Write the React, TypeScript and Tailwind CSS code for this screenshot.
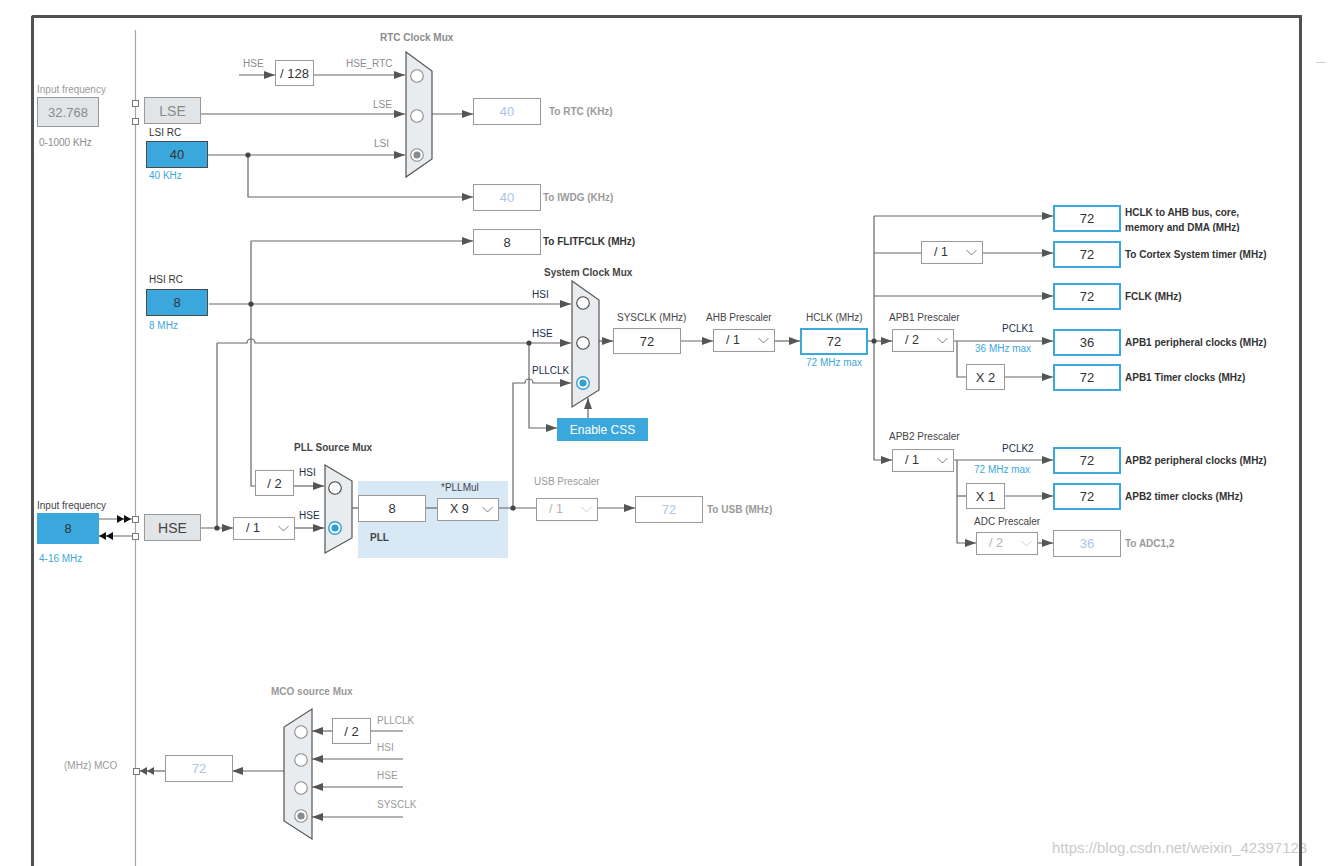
import React from 'react';

type Tone = 'plain' | 'gray' | 'blue' | 'fill' | 'out' | 'dim';

const tones: Record<Tone, string> = {
  plain: 'bg-white border border-[#9a9a9a] text-[#333]',
  gray: 'bg-[#e2e5e8] border border-[#9a9a9a] text-[#8a8a8a]',
  blue: 'bg-[#3aa8dc] border border-[#4a4a4a] text-[#333]',
  fill: 'bg-[#3aa8dc] text-[#333]',
  out: 'bg-white border-2 border-[#3aa8dc] text-[#333]',
  dim: 'bg-white border border-[#9a9a9a] text-[#a9c6e6]',
};

function Box({ className = '', tone = 'plain', children }: { className?: string; tone?: Tone; children?: React.ReactNode }) {
  return (
    <div className={`flex shrink-0 items-center justify-center text-[13px] leading-none ${tones[tone]} ${className}`}>
      {children}
    </div>
  );
}

function Select({ className = '', value, dim = false }: { className?: string; value: string; dim?: boolean }) {
  return (
    <div
      className={`flex shrink-0 items-center justify-between w-[62px] h-[23px] pl-[12px] pr-[5px] bg-white border border-[#9a9a9a] text-[12.5px] leading-none ${
        dim ? 'text-[#b4b4b4]' : 'text-[#333]'
      } ${className}`}
    >
      <span>{value}</span>
      <svg width="11" height="7" viewBox="0 0 11 7">
        <path d="M0.5 1 L5.5 6 L10.5 1" fill="none" stroke={dim ? '#cfcfcf' : '#808080'} strokeWidth="1" />
      </svg>
    </div>
  );
}

function Label({ className = '', children }: { className?: string; children: React.ReactNode }) {
  return <div className={`whitespace-nowrap leading-none text-[10px] ${className}`}>{children}</div>;
}

// a label pinned to a wire or mux, centred on its y
function Tag({ className = '', children }: { className?: string; children: React.ReactNode }) {
  return <Label className={`absolute -translate-y-1/2 ${className}`}>{children}</Label>;
}

// output box with its caption at the right
function Output({ className = '', value, caption, dim = false, gap = 'gap-[4px]' }: { className?: string; value: string; caption: string; dim?: boolean; gap?: string }) {
  return (
    <div className={`absolute flex items-center ${gap} ${className}`}>
      <Box tone={dim ? 'dim' : 'out'} className="w-[68px] h-[27px]">
        {value}
      </Box>
      <Label className={`font-bold ${dim ? 'text-[#9a9a9a]' : 'text-[#333]'}`}>{caption}</Label>
    </div>
  );
}

// wires that end in an arrow head
const arrowed = [
  'M239 75H275',
  'M313 75H405',
  'M200 114H405',
  'M207 155H405',
  'M432 114H473',
  'M248 155V197H473',
  'M251 241H473',
  'M209 304H571',
  'M217 343H247a4 4 0 0 1 8 0H571',
  'M200 528H233',
  'M294 528H324',
  'M293 486H324',
  'M513 508V383H525a4 4 0 0 1 8 0H571',
  'M529 343V428H557',
  'M588 418V398',
  'M597 508H635',
  'M599 341H613',
  'M680 341H713',
  'M774 341H800',
  'M867 341H892',
  'M874 216H1053',
  'M982 253H1053',
  'M874 296H1053',
  'M874 341V460H892',
  'M953 341H1053',
  'M1004 377H1053',
  'M953 460H1053',
  'M957 460V543H976',
  'M1004 496H1053',
  'M1037 543H1053',
  'M332 731H312',
  'M403 759H312',
  'M403 787H312',
  'M403 817H312',
  'M284 771H232',
];

const plain = [
  'M251 241V486H255',
  'M217 343V528',
  'M351 508H358',
  'M425 508H437',
  'M498 508H536',
  'M874 216V341',
  'M874 253H921',
  'M957 341V377H966',
  'M957 496H966',
  'M403 731H370',
  'M165 771H139',
  'M98 519H132',
  'M98 536H132',
];

const dots: [number, number][] = [
  [248, 155],
  [251, 304],
  [217, 528],
  [529, 343],
  [513, 508],
  [874, 341],
];

type Radio = { x: number; y: number; on?: 'gray' | 'blue'; light?: boolean };

const radios: Radio[] = [
  { x: 417, y: 76, light: true },
  { x: 417, y: 116, light: true },
  { x: 417, y: 155, on: 'gray' },
  { x: 583, y: 303 },
  { x: 583, y: 343 },
  { x: 583, y: 383, on: 'blue' },
  { x: 335, y: 488 },
  { x: 335, y: 528, on: 'blue' },
  { x: 301, y: 732, light: true },
  { x: 301, y: 760, light: true },
  { x: 301, y: 788, light: true },
  { x: 301, y: 816, on: 'gray' },
];

const muxes = [
  '406,52 432,71 432,159 406,177',
  '572,281 599,300 599,390 572,407',
  '325,465 352,481 352,538 325,553',
  '312,709 312,839 284,821 284,727',
];

const ports: [number, number][] = [
  [132, 100],
  [132, 118],
  [132, 516],
  [132, 533],
  [133, 768],
];

function Wires() {
  return (
    <svg className="absolute inset-0" width="1332" height="866">
      <defs>
        <marker id="ar" viewBox="0 0 11 8" refX="11" refY="4" markerWidth="11" markerHeight="8" markerUnits="userSpaceOnUse" orient="auto">
          <path d="M0 0 L11 4 L0 8 z" fill="#555" />
        </marker>
      </defs>
      <line x1="135.5" y1="30" x2="135.5" y2="866" stroke="#a6a6a6" strokeWidth="1.2" />
      <line x1="1316" y1="62.5" x2="1326" y2="62.5" stroke="#d0d0d0" strokeWidth="1" />
      {plain.map((d) => (
        <path key={d} d={d} fill="none" stroke="#666" strokeWidth="1.2" />
      ))}
      {arrowed.map((d) => (
        <path key={d} d={d} fill="none" stroke="#666" strokeWidth="1.2" markerEnd="url(#ar)" />
      ))}
      {dots.map(([x, y]) => (
        <circle key={`${x}-${y}`} cx={x} cy={y} r="2.6" fill="#444" />
      ))}
      {muxes.map((p) => (
        <polygon key={p} points={p} fill="#e9ecef" stroke="#555" strokeWidth="1.2" />
      ))}
      {radios.map((r) => (
        <g key={`${r.x}-${r.y}`}>
          <circle
            cx={r.x}
            cy={r.y}
            r="6.3"
            fill="#fff"
            stroke={r.on === 'blue' ? '#2f9fd8' : r.on === 'gray' || r.light ? '#8c8c8c' : '#444'}
            strokeWidth={r.on === 'blue' ? 1.4 : 1.1}
          />
          {r.on && <circle cx={r.x} cy={r.y} r="3.6" fill={r.on === 'blue' ? '#2f9fd8' : '#8a8a8a'} />}
        </g>
      ))}
      {/* HSE pad arrows */}
      <polygon points="117,515 124,519 117,523" fill="#111" />
      <polygon points="124,515 131,519 124,523" fill="#111" />
      <polygon points="113,532 106,536 113,540" fill="#111" />
      <polygon points="106,532 99,536 106,540" fill="#111" />
      {/* MCO pad arrows */}
      <polygon points="147,767 140,771 147,775" fill="#555" />
      <polygon points="154,767 147,771 154,775" fill="#555" />
      {ports.map(([x, y]) => (
        <rect key={`${x}-${y}`} x={x + 0.5} y={y + 0.5} width="6" height="6" fill="#fff" stroke="#777" strokeWidth="1" />
      ))}
    </svg>
  );
}

export default function App() {
  return (
    <div className="relative w-[1332px] h-[866px] overflow-hidden bg-white font-['Liberation_Sans',Arial,sans-serif]">
      <div className="absolute inset-0">
        <div className="absolute left-[1052px] top-[838px] whitespace-nowrap text-[15px] leading-[20px] text-[#cacaca]">
          https://blog.csdn.net/weixin_42397123
        </div>

        {/* PLL area background */}
        <div className="absolute left-[358px] top-[481px] w-[150px] h-[77px] bg-[#d9e8f5]" />

        <Wires />

        {/* RTC / LSE / LSI */}
        <Tag className="left-[380px] top-[38px] font-bold text-[#8c8c8c]">RTC Clock Mux</Tag>
        <Tag className="left-[243px] top-[64px] text-[#8c8c8c]">HSE</Tag>
        <Tag className="left-[346px] top-[64px] text-[#8c8c8c]">HSE_RTC</Tag>
        <Tag className="left-[373px] top-[105px] text-[#8c8c8c]">LSE</Tag>
        <Tag className="left-[374px] top-[144px] text-[#8c8c8c]">LSI</Tag>
        <Box className="absolute left-[275px] top-[60px] w-[39px] h-[26px]">/ 128</Box>

        <div className="absolute left-[37px] top-[85px] flex flex-col">
          <Label className="text-[#9a9a9a]">Input frequency</Label>
          <Box tone="gray" className="mt-[2px] w-[62px] h-[30px]">32.768</Box>
          <Label className="mt-[11px] ml-[2px] text-[#8c8c8c]">0-1000 KHz</Label>
        </div>
        <Box tone="gray" className="absolute left-[144px] top-[97px] w-[57px] h-[27px] text-[14px]">LSE</Box>
        <div className="absolute left-[146px] top-[128px] flex flex-col">
          <Label className="ml-[3px] text-[#333]">LSI RC</Label>
          <Box tone="blue" className="mt-[3px] w-[62px] h-[27px]">40</Box>
          <Label className="mt-[3px] ml-[3px] text-[#3aa8dc]">40 KHz</Label>
        </div>

        <Output className="left-[473px] top-[98px]" gap="gap-[8px]" dim value="40" caption="To RTC (KHz)" />
        <Output className="left-[473px] top-[184px]" gap="gap-[2px]" dim value="40" caption="To IWDG (KHz)" />
        <div className="absolute left-[473px] top-[229px] flex items-center gap-[2px]">
          <Box className="w-[68px] h-[26px]">8</Box>
          <Label className="font-bold text-[#333]">To FLITFCLK (MHz)</Label>
        </div>

        {/* HSI */}
        <div className="absolute left-[146px] top-[275px] flex flex-col">
          <Label className="ml-[3px] text-[#333]">HSI RC</Label>
          <Box tone="blue" className="mt-[4px] w-[62px] h-[27px]">8</Box>
          <Label className="mt-[5px] ml-[3px] text-[#3aa8dc]">8 MHz</Label>
        </div>

        {/* System clock mux */}
        <Tag className="left-[544px] top-[273px] font-bold text-[#444]">System Clock Mux</Tag>
        <Tag className="left-[532px] top-[295px] text-[#1c2d4c]">HSI</Tag>
        <Tag className="left-[532px] top-[334px] text-[#1c2d4c]">HSE</Tag>
        <Tag className="left-[532px] top-[371px] text-[#1c2d4c]">PLLCLK</Tag>
        <div className="absolute left-[557px] top-[418px] w-[91px] h-[23px] flex items-center justify-center bg-[#3aa8dc] text-white text-[12px] leading-none">
          Enable CSS
        </div>

        <div className="absolute left-[613px] top-[313px] flex flex-col">
          <Label className="ml-[4px] text-[#444]">SYSCLK (MHz)</Label>
          <Box className="mt-[5px] w-[68px] h-[26px]">72</Box>
        </div>
        <div className="absolute left-[706px] top-[313px] flex flex-col">
          <Label className="text-[#444]">AHB Prescaler</Label>
          <Select className="mt-[6px] ml-[7px]" value="/ 1" />
        </div>
        <div className="absolute left-[800px] top-[313px] flex flex-col">
          <Label className="ml-[6px] text-[#444]">HCLK (MHz)</Label>
          <Box tone="out" className="mt-[5px] w-[68px] h-[27px]">72</Box>
          <Label className="mt-[3px] ml-[6px] text-[#3aa8dc]">72 MHz max</Label>
        </div>

        {/* AHB outputs */}
        <div className="absolute left-[1053px] top-[205px] flex items-start gap-[4px]">
          <Box tone="out" className="w-[68px] h-[27px]">72</Box>
          <div className="h-[27px] overflow-hidden whitespace-nowrap text-[10px] leading-[15px] font-bold text-[#333]">
            HCLK to AHB bus, core,
            <br />
            memory and DMA (MHz)
          </div>
        </div>
        <Select className="absolute left-[921px] top-[241px]" value="/ 1" />
        <Output className="left-[1053px] top-[241px]" value="72" caption="To Cortex System timer (MHz)" />
        <Output className="left-[1053px] top-[283px]" value="72" caption="FCLK (MHz)" />

        {/* APB1 */}
        <div className="absolute left-[889px] top-[313px] flex flex-col">
          <Label className="text-[#444]">APB1 Prescaler</Label>
          <Select className="mt-[6px] ml-[3px]" value="/ 2" />
        </div>
        <Tag className="left-[1002px] top-[329px] text-[#1c2d4c]">PCLK1</Tag>
        <Tag className="left-[975px] top-[349px] text-[#3aa8dc]">36 MHz max</Tag>
        <Output className="left-[1053px] top-[329px]" value="36" caption="APB1 peripheral clocks (MHz)" />
        <Box className="absolute left-[966px] top-[364px] w-[39px] h-[26px]">X 2</Box>
        <Output className="left-[1053px] top-[364px]" value="72" caption="APB1 Timer clocks (MHz)" />

        {/* APB2 */}
        <div className="absolute left-[889px] top-[432px] flex flex-col">
          <Label className="text-[#444]">APB2 Prescaler</Label>
          <Select className="mt-[7px] ml-[3px]" value="/ 1" />
        </div>
        <Tag className="left-[1002px] top-[449px] text-[#1c2d4c]">PCLK2</Tag>
        <Tag className="left-[974px] top-[470px] text-[#3aa8dc]">72 MHz max</Tag>
        <Output className="left-[1053px] top-[447px]" value="72" caption="APB2 peripheral clocks (MHz)" />
        <Box className="absolute left-[966px] top-[483px] w-[39px] h-[26px]">X 1</Box>
        <Output className="left-[1053px] top-[483px]" value="72" caption="APB2 timer clocks (MHz)" />
        <div className="absolute left-[974px] top-[517px] flex flex-col">
          <Label className="text-[#444]">ADC Prescaler</Label>
          <Select dim className="mt-[5px] ml-[2px]" value="/ 2" />
        </div>
        <Output className="left-[1053px] top-[530px]" dim value="36" caption="To ADC1,2" />

        {/* HSE / PLL */}
        <div className="absolute left-[37px] top-[501px] flex flex-col">
          <Label className="text-[#444]">Input frequency</Label>
          <Box tone="fill" className="mt-[2px] w-[62px] h-[31px]">8</Box>
          <Label className="mt-[10px] ml-[2px] text-[#3aa8dc]">4-16 MHz</Label>
        </div>
        <Box tone="gray" className="absolute left-[144px] top-[514px] w-[57px] h-[27px] text-[14px] !text-[#444]">HSE</Box>
        <Select className="absolute left-[233px] top-[517px]" value="/ 1" />

        <Tag className="left-[294px] top-[448px] font-bold text-[#444]">PLL Source Mux</Tag>
        <Tag className="left-[299px] top-[473px] text-[#1c2d4c]">HSI</Tag>
        <Tag className="left-[299px] top-[516px] text-[#1c2d4c]">HSE</Tag>
        <Box className="absolute left-[255px] top-[470px] w-[39px] h-[26px]">/ 2</Box>

        <Box className="absolute left-[358px] top-[495px] w-[68px] h-[27px]">8</Box>
        <div className="absolute left-[437px] top-[483px] flex flex-col">
          <Label className="ml-[4px] text-[#444]">*PLLMul</Label>
          <Select className="mt-[5px]" value="X 9" />
        </div>
        <Tag className="left-[370px] top-[538px] font-bold text-[#444]">PLL</Tag>

        <div className="absolute left-[534px] top-[477px] flex flex-col">
          <Label className="text-[#9a9a9a]">USB Prescaler</Label>
          <Select dim className="mt-[11px] ml-[2px]" value="/ 1" />
        </div>
        <Output className="left-[635px] top-[496px]" dim value="72" caption="To USB (MHz)" />

        {/* MCO */}
        <Tag className="left-[271px] top-[692px] font-bold text-[#9a9a9a]">MCO source Mux</Tag>
        <Box className="absolute left-[332px] top-[718px] w-[39px] h-[26px]">/ 2</Box>
        <Tag className="left-[377px] top-[721px] text-[#9a9a9a]">PLLCLK</Tag>
        <Tag className="left-[377px] top-[748px] text-[#9a9a9a]">HSI</Tag>
        <Tag className="left-[377px] top-[776px] text-[#9a9a9a]">HSE</Tag>
        <Tag className="left-[377px] top-[805px] text-[#9a9a9a]">SYSCLK</Tag>
        <Box tone="dim" className="absolute left-[165px] top-[755px] w-[68px] h-[27px]">72</Box>
        <Tag className="left-[64px] top-[766px] text-[#9a9a9a]">(MHz) MCO</Tag>
      </div>

      <div className="relative z-10 ml-[31px] mt-[15px] w-[1271px] h-[900px] rounded-tl-[3px] border-[3px] border-b-0 border-[#505050]" />
    </div>
  );
}
